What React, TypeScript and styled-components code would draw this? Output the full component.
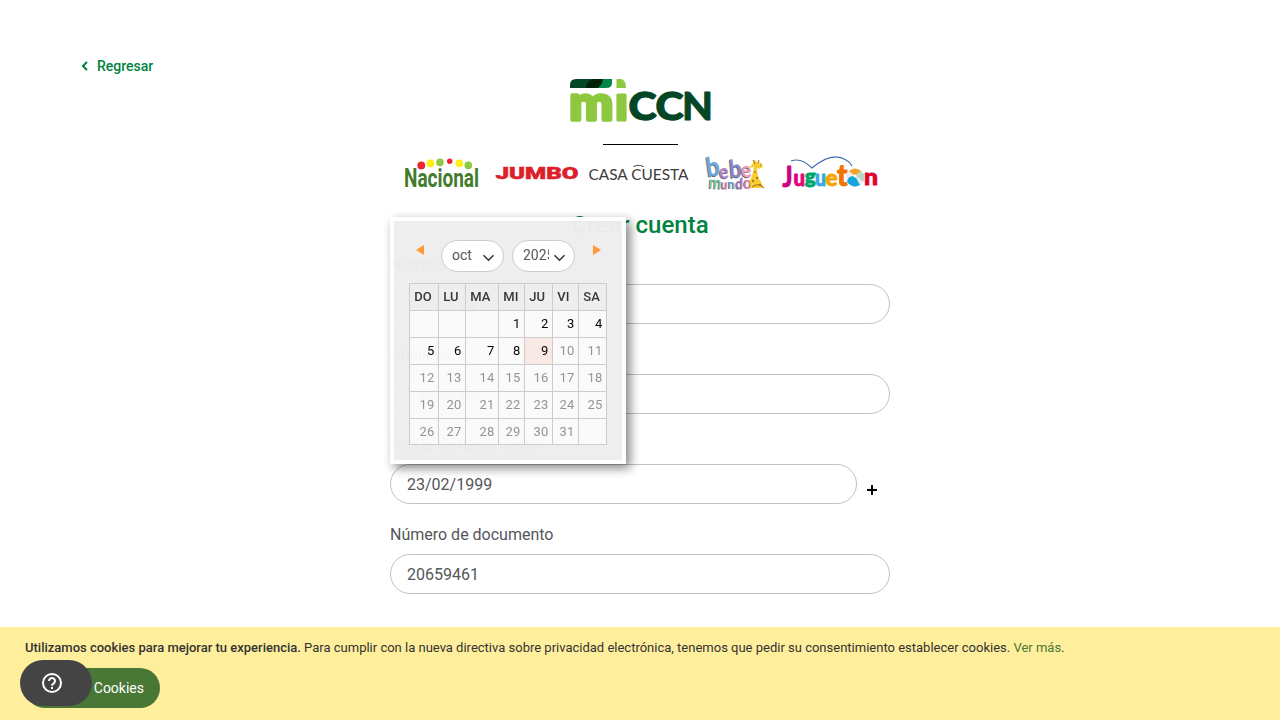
import React from 'react';
import styled, { createGlobalStyle } from 'styled-components';

const GlobalStyle = createGlobalStyle`
  * { box-sizing: border-box; }
  html, body { margin: 0; background: #fff; height: 720px; overflow: hidden; }
  body { font-family: Roboto, sans-serif; color: #54565b; }
`;

const Page = styled.div`
  position: relative;
  height: 720px;
  overflow: hidden;
`;

const TopBar = styled.nav`
  height: 79px;
  padding: 56px 0 0 81px;
`;

const BackLink = styled.a`
  display: inline-flex;
  align-items: center;
  gap: 8px;
  color: #00833e;
  font-size: 14px;
  font-weight: 500;
  line-height: 20px;
  text-decoration: none;
`;

const Main = styled.main`
  width: 500px;
  margin: 0 auto;
  display: flex;
  flex-direction: column;
`;

const Brand = styled.div`
  display: flex;
  flex-direction: column;
  align-items: center;
  svg { display: block; overflow: visible; }
`;

const Rule = styled.hr`
  width: 75px;
  height: 1px;
  border: 0;
  margin: 21px 0 0;
  background: #000;
`;

const Stores = styled.div`
  display: flex;
  height: 45px;
  margin: 5px 0 0 5px;
  svg { display: block; flex: none; overflow: visible; }
`;

const Title = styled.h1`
  margin: 12px 0 0;
  height: 36px;
  line-height: 36px;
  text-align: center;
  color: #00833e;
  font-size: 24px;
  font-weight: 500;
`;

const Form = styled.form`
  padding-top: 7px;
`;

const Field = styled.div`
  height: 90px;
`;

const Label = styled.label`
  display: block;
  height: 30px;
  padding-top: 3px;
  font-size: 16px;
  line-height: 24px;
  margin-bottom: 4px;
`;

const Required = styled.span`
  color: #e02b27;
`;

const Row = styled.div`
  display: flex;
  gap: 10px;
  svg { margin-top: 21px; }
`;

const Input = styled.input<{ $width?: number }>`
  display: block;
  width: ${(p) => p.$width ?? 500}px;
  height: 40px;
  padding: 0 16px;
  border: 1px solid #c2c2c2;
  border-radius: 20px;
  background: #fff;
  color: #54565b;
  font: 16px Roboto, sans-serif;
  outline: none;
`;

const Calendar = styled.section`
  position: absolute;
  left: 390px;
  top: 217px;
  width: 236px;
  height: 247px;
  padding: 19px 15px 0;
  border: 4px solid #fff;
  background: #eee;
  box-shadow: 4px 4px 10px rgba(0, 0, 0, 0.5);
  opacity: 0.98;
`;

const CalendarHead = styled.header`
  display: flex;
  height: 43px;
  padding-left: 7px;
`;

const Arrow = styled.button<{ $next?: boolean }>`
  width: 8px;
  height: 10px;
  margin: 5px 0 0 ${(p) => (p.$next ? 18 : 0)}px;
  padding: 0;
  border: 0;
  background: #ff9632;
  clip-path: ${(p) => (p.$next ? 'polygon(0 0, 100% 50%, 0 100%)' : 'polygon(100% 0, 0 50%, 100% 100%)')};
`;

const Picker = styled.div<{ $first?: boolean }>`
  display: flex;
  align-items: center;
  width: 63px;
  height: 32px;
  margin-left: ${(p) => (p.$first ? 17 : 8)}px;
  padding-left: 10px;
  border: 1px solid #ccc;
  border-radius: 16px;
  background: #fff;
  color: #555;
  font-size: 14px;
  svg { margin: 4px 0 0 4px; flex: none; }
`;

const PickerText = styled.span`
  width: 26px;
  overflow: hidden;
  white-space: nowrap;
  line-height: 20px;
  padding-bottom: 2px;
`;

const Days = styled.div`
  display: grid;
  grid-template-columns: 29px 27px 33px 26px 28px 26px 28px;
  grid-template-rows: repeat(5, 27px) 26px;
  width: 198px;
  border-left: 1px solid #ccc;
  border-top: 1px solid #ccc;
`;

const DayCell = styled.div<{ $kind: 'head' | 'day' | 'today' | 'off' }>`
  border-right: 1px solid #ccc;
  border-bottom: 1px solid #ccc;
  padding: ${(p) => (p.$kind === 'head' ? '0 0 0 4.3px' : '0 3.8px 0 0')};
  text-align: ${(p) => (p.$kind === 'head' ? 'left' : 'right')};
  line-height: 26px;
  font-size: 13px;
  font-weight: ${(p) => (p.$kind === 'head' ? 500 : 400)};
  color: ${(p) => (p.$kind === 'head' ? '#333' : p.$kind === 'off' ? '#929292' : '#000')};
  background: ${(p) => (p.$kind === 'head' ? '#eee' : p.$kind === 'today' ? '#f9e8e4' : '#fafafa')};
`;

const CookieBar = styled.aside`
  position: absolute;
  left: 0;
  right: 0;
  bottom: 0;
  height: 93px;
  padding: 12px 25px;
  background: #ffee9c;
  color: #333;
  font-size: 13px;
  line-height: 18px;
  a { color: #467a39; }
`;

const Notice = styled.p`
  margin: 0;
  b { font-weight: 500; }
`;

const CookieButton = styled.button`
  display: block;
  width: 135px;
  height: 40px;
  margin-top: 11px;
  padding: 0 16px 0 0;
  border: 0;
  border-radius: 20px;
  background: #497736;
  color: #fff;
  font: 14px Roboto, sans-serif;
  text-align: right;
`;

const HelpButton = styled.button`
  position: absolute;
  left: 20px;
  top: 660px;
  width: 72px;
  height: 46px;
  padding: 0 8px 0 0;
  border: 0;
  border-radius: 23px;
  background: #444;
  display: flex;
  align-items: center;
  justify-content: center;
`;

type WordProps = {
  x: number; y: number; width: number; size: number; fill: string;
  family?: string; weight?: number; stroke?: number; rise?: number; children: string;
};

const Word = ({ x, y, width, size, fill, family = 'Roboto', weight = 900, stroke = 0, rise = 1, children }: WordProps) => (
  <text
    transform={`translate(${x} ${y}) scale(1 ${rise})`}
    textLength={width}
    lengthAdjust="spacingAndGlyphs"
    fontFamily={`${family}, sans-serif`}
    fontSize={size}
    fontWeight={weight}
    fill={fill}
    stroke={stroke ? fill : 'none'}
    strokeWidth={stroke}
    strokeLinejoin="round"
  >
    {children}
  </text>
);

const MiCcnLogo = () => (
  <svg width="140" height="44" viewBox="0 0 140 44">
    <path d="M0 9V6Q0 0 6 0H33L29 9Z" fill="#044625" />
    <path d="M31 0H42V4Q42 9 36 9H29Z" fill="#008747" />
    <path d="M16 9Q17 0 25 0H33Q32 9 24 9Z" fill="#012109" />
    <path d="M46.500 0H51Q56 1 56 9H46.500Z" fill="#8dc83f" />
    <Word x={-0.700} y={40.500} width={44} size={39} rise={1.2} fill="#8dc83f" stroke={2.800} family="Lato">m</Word>
    <Word x={44.900} y={40.500} width={13} size={39} rise={1.2} fill="#8dc83f" stroke={2.600} family="Lato">ı</Word>
    <Word x={58.500} y={41.200} width={28} size={38} fill="#044625" stroke={1.3} family="Lato">C</Word>
    <Word x={85.500} y={41.200} width={28} size={38} fill="#044625" stroke={1.3} family="Lato">C</Word>
    <Word x={112} y={41.200} width={31} size={38} fill="#044625" stroke={0.8} family="Lato">N</Word>
  </svg>
);

const NacionalLogo = () => (
  <svg width="85" height="45" viewBox="395 150 85 45">
    <circle cx="421.300" cy="165.400" r="3.900" fill="#ed2431" />
    <circle cx="430.500" cy="163.300" r="3.900" fill="#ffed16" />
    <circle cx="440" cy="162.400" r="3.800" fill="#8dc83f" />
    <circle cx="449.700" cy="161.300" r="2.700" fill="#ed2431" />
    <circle cx="459.300" cy="163.300" r="3.900" fill="#ffed16" />
    <circle cx="468.300" cy="165.400" r="3.800" fill="#8dc83f" />
    <Word x={404} y={186.700} width={75} size={20} rise={1.33} fill="#437b2c" weight={700}>Nacional</Word>
  </svg>
);

const JumboLogo = () => (
  <svg width="105" height="45" viewBox="480 150 105 45">
    <Word x={495.500} y={178.800} width={83} size={16.800} fill="#dc2029" weight={900} stroke={0.500}>JUMBO</Word>
  </svg>
);

const CasaLogo = () => (
  <svg width="110" height="45" viewBox="585 150 110 45">
    <Word x={588.500} y={179.700} width={100} size={16} fill="#3c3c3c" family="Lato" weight={400}>CASA CUESTA</Word>
    <path d="M633.500 166.800Q638.500 163.800 643.500 166.800" stroke="#444" strokeWidth="1.100" fill="none" />
  </svg>
);

const bebe: [string, number, number, number, string, number][] = [
  ['b', 707.500, 177, 27, '#71a8d7', -8],
  ['e', 720, 179, 20, '#b78acb', -8],
  ['b', 730, 178, 25, '#8b86c5', -5],
  ['e', 742, 178, 22, '#f29bb5', -8],
  ['m', 708.500, 188, 17, '#82c7a1', 4],
  ['u', 721, 188.500, 13, '#e88cab', 3],
  ['n', 728, 188.500, 14, '#77acd7', 0],
  ['d', 735.500, 188.500, 15, '#ae83c4', 2],
  ['o', 743.500, 188.500, 17, '#e88cab', 0],
];

const BebeMundoLogo = () => (
  <svg width="73" height="45" viewBox="695 150 73 45">
    {[0.8, 0].map((shift) =>
      bebe.map(([char, x, y, size, fill, angle], i) => (
        <text
          key={`${shift}-${i}`}
          transform={`translate(${x - shift} ${y + shift}) rotate(${angle}) scale(.88 1)`}
          fontFamily="Lato, sans-serif"
          fontSize={size}
          fontWeight="700"
          fill={shift ? '#5d6068' : fill}
        >
          {char}
        </text>
      )),
    )}
    <path d="M749 168L754 162 754 159 757 162 761 163 763 167 759 169 757 168Q757 176 761 182L764 188 751 188Q748 182 752 176L754 167Z" fill="#f8cd32" />
    <path d="M753 160l2 4M759 160l-1 3M752 187q6-5 12 1" stroke="#a06a25" fill="none" />
    <g fill="#ae7426">
      <circle cx="755" cy="172" r="1" />
      <circle cx="757" cy="178" r="1.200" />
      <circle cx="753" cy="181" r="1.200" />
      <circle cx="760" cy="185" r="1.200" />
      <circle cx="761" cy="165" r=".8" />
    </g>
  </svg>
);

const juguete: [string, number, number, number, number, string][] = [
  ['J', 782.500, 187, 10, 28, '#cb0083'],
  ['u', 793.500, 186, 11.500, 22, '#e5007d'],
  ['g', 804.800, 184, 11, 21, '#00a667'],
  ['u', 815, 186, 11, 22, '#36a9e1'],
  ['e', 825.500, 186, 12, 23, '#f6a400'],
  ['t', 837, 186, 10.500, 31, '#ef7400'],
  ['n', 864, 185.300, 14, 23, '#e4002c'],
];

const JuguetonLogo = () => (
  <svg width="112" height="45" viewBox="768 150 112 45">
    <path d="M791 161Q801 157 812 168Q832 151 846 160Q850 162 852 166" stroke="#3d6ead" strokeWidth="1.100" fill="none" />
    {juguete.map(([char, x, y, width, size, fill], i) => (
      <Word key={i} x={x} y={y} width={width} size={size} fill={fill} family="Lato" weight={900} stroke={0.900}>
        {char}
      </Word>
    ))}
    <circle cx="855" cy="177.500" r="9.300" fill="#ededeb" />
    <path d="M849 171Q855 166 861 171L855 176Z" fill="#f7a32b" />
    <path d="M847 182Q848 175 855 176L860 185Q853 189 847 182Z" fill="#14a5dd" />
    <path d="M861 171Q867 176 863 182L856 176Z" fill="#b8d8ca" />
    <circle cx="855" cy="176" r="1.500" fill="#fff" />
  </svg>
);

const Chevron = () => (
  <svg width="13" height="8" viewBox="0 0 13 8">
    <path d="M1.500 1.200L6.500 6.200 11.500 1.200" fill="none" stroke="#333" strokeWidth="1.600" />
  </svg>
);

const weekdays = ['DO', 'LU', 'MA', 'MI', 'JU', 'VI', 'SA'];
const slots = Array.from({ length: 35 }, (_, i) => i - 2);

export default function App() {
  return (
    <>
      <GlobalStyle />
      <Page>
        <TopBar>
          <BackLink>
            <svg width="8" height="10" viewBox="0 0 8 10">
              <path d="M6 1L2 5l4 4" fill="none" stroke="#00833e" strokeWidth="2" />
            </svg>
            Regresar
          </BackLink>
        </TopBar>
        <Main>
          <Brand>
            <MiCcnLogo />
            <Rule />
          </Brand>
          <Stores>
            <NacionalLogo />
            <JumboLogo />
            <CasaLogo />
            <BebeMundoLogo />
            <JuguetonLogo />
          </Stores>
          <Title>Crear cuenta</Title>
          <Form>
            <Field>
              <Label>Nombre<Required>*</Required></Label>
              <Input defaultValue="#4Test$%" />
            </Field>
            <Field>
              <Label>Apellido<Required>*</Required></Label>
              <Input defaultValue="Vandervort" />
            </Field>
            <Field>
              <Label>Fecha de nacimiento</Label>
              <Row>
                <Input $width={467} defaultValue="23/02/1999" />
                <svg width="10" height="10" viewBox="0 0 10 10">
                  <path d="M5 0v10M0 5h10" stroke="#000" strokeWidth="2" />
                </svg>
              </Row>
            </Field>
            <Field>
              <Label>Número de documento</Label>
              <Input defaultValue="20659461" />
            </Field>
          </Form>
        </Main>
        <Calendar>
          <CalendarHead>
            <Arrow aria-label="Anterior" />
            <Picker $first><PickerText>oct</PickerText><Chevron /></Picker>
            <Picker><PickerText>2025</PickerText><Chevron /></Picker>
            <Arrow $next aria-label="Siguiente" />
          </CalendarHead>
          <Days>
            {weekdays.map((d) => <DayCell key={d} $kind="head">{d}</DayCell>)}
            {slots.map((d) => (
              <DayCell key={d} $kind={d === 9 ? 'today' : d > 9 ? 'off' : 'day'}>
                {d > 0 && d < 32 ? d : ''}
              </DayCell>
            ))}
          </Days>
        </Calendar>
        <CookieBar>
          <Notice>
            <b>Utilizamos cookies para mejorar tu experiencia.</b> Para cumplir con la nueva directiva sobre privacidad electrónica, tenemos que pedir su consentimiento establecer cookies. <a>Ver más</a>.
          </Notice>
          <CookieButton>Cookies</CookieButton>
        </CookieBar>
        <HelpButton aria-label="Ayuda">
          <svg width="20" height="20" viewBox="0 0 20 20" fill="none" stroke="#fff" strokeWidth="2">
            <circle cx="10" cy="10" r="9" />
            <path d="M7 8a3 3 0 1 1 4.500 2.600Q10 11.500 10 12.800M10 14v2" />
          </svg>
        </HelpButton>
      </Page>
    </>
  );
}
